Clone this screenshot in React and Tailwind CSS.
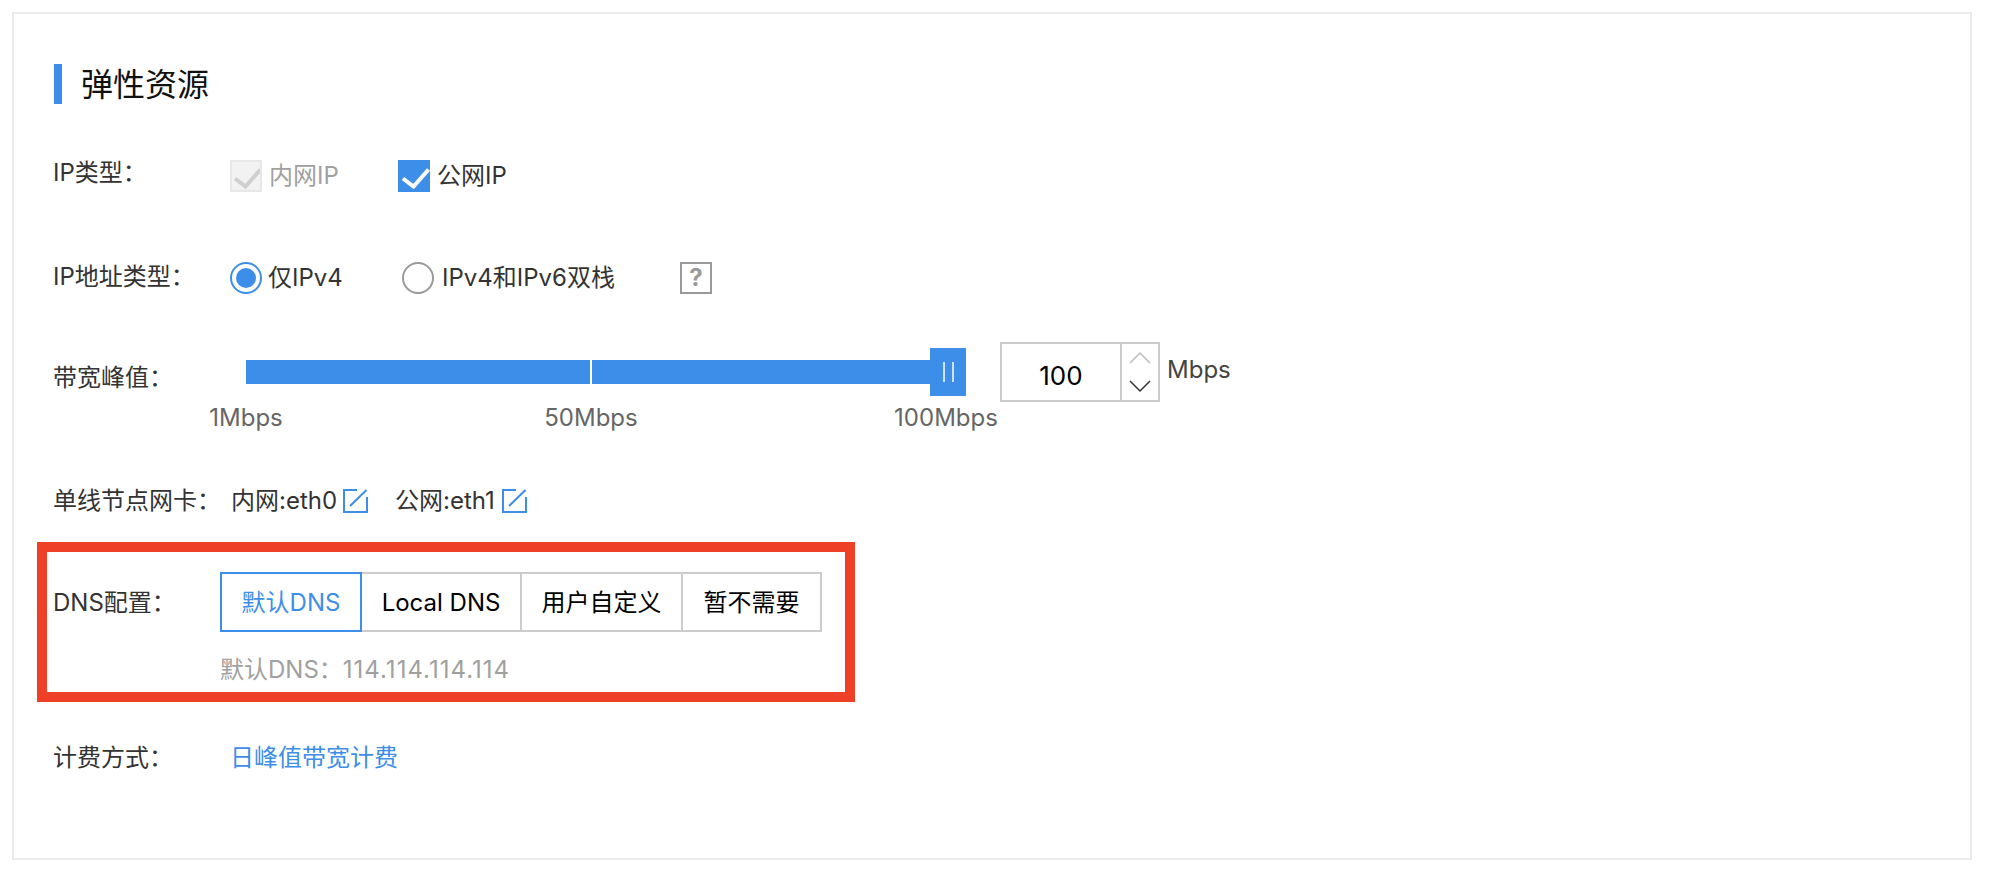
const font = 'font-["Inter","Noto_Sans_CJK_SC",sans-serif]';

function Check({ color }) {
  return (
    <svg width="32" height="32" viewBox="0 0 32 32" fill="none">
      <path d="M5 18.5 L15.5 26.5 L30.5 9.5" stroke={color} strokeWidth="4" />
    </svg>
  );
}

function EditIcon() {
  return (
    <svg width="25" height="24" viewBox="0 0 25 24" fill="none" stroke="#3d8ee8" strokeWidth="2">
      <path d="M14 1 H1 V23 H24 V8" />
      <path d="M7 17 L23.5 1" />
    </svg>
  );
}

function Label({ children, className = '' }) {
  return <div className={`-ml-px w-[177px] shrink-0 text-[24px] leading-6 text-[#333] ${className}`}>{children}</div>;
}

function SegButton({ children, active, width }) {
  return (
    <div
      className={`flex h-[60px] items-center justify-center border-2 pt-[2px] text-[24px] -ml-[2px] first:ml-0 ${width} ${
        active ? 'z-10 border-[#3d8ee8] text-[#3d8ee8]' : 'border-[#ccc] text-black'
      }`}
    >
      {children}
    </div>
  );
}

export default function App() {
  return (
    <div className={`h-[870px] w-[1992px] overflow-hidden bg-white pl-3 pt-3 ${font}`}>
      <div className="h-[848px] w-[1960px] border-2 border-[#ebebeb] pl-10 pt-[50px]">
        <div className="flex h-10 items-center border-l-8 border-[#3d8ee8] pl-[19px] pt-[2px] text-[32px] leading-10 text-[#111]">
          弹性资源
        </div>

        <div className="mt-14 flex h-8">
          <Label className="mt-[1px]">IP类型：</Label>
          <div className="flex w-[168px] items-center">
            <div className="h-8 w-8 overflow-hidden border-2 border-[#e8e8e8] bg-[#f2f2f2]">
              <div className="-m-[2px]">
                <Check color="#cfcfcf" />
              </div>
            </div>
            <span className="ml-[7px] text-[24px] text-[#a0a0a0]">内网IP</span>
          </div>
          <div className="flex items-center">
            <div className="h-8 w-8 overflow-hidden bg-[#3d8ee8]">
              <Check color="#fff" />
            </div>
            <span className="ml-[7px] text-[24px] text-[#333]">公网IP</span>
          </div>
        </div>

        <div className="mt-[70px] flex h-8">
          <Label className="mt-[3px]">IP地址类型：</Label>
          <div className="flex w-[172px] items-center">
            <div className="flex h-8 w-8 items-center justify-center rounded-full border-2 border-[#3d8ee8]">
              <div className="h-5 w-5 rounded-full bg-[#3d8ee8]"></div>
            </div>
            <span className="ml-[6px] text-[24px] text-[#333]">仅IPv4</span>
          </div>
          <div className="flex w-[278px] items-center">
            <div className="h-8 w-8 rounded-full border-2 border-[#999]"></div>
            <span className="ml-2 text-[24px] text-[#333]">IPv4和IPv6双栈</span>
          </div>
          <div className="flex h-8 w-8 items-center justify-center border-2 border-[#999] text-[24px] font-bold leading-none text-[#999]">
            ?
          </div>
        </div>

        <div className="mt-12 flex">
          <Label className="mt-[24px]">带宽峰值：</Label>
          <div className="w-[770px] shrink-0">
            <div className="ml-4 mt-[6px] flex h-12 w-[720px] items-center">
              <div className="relative h-6 w-[684px] bg-[#3d8ee8]">
                <div className="absolute left-[344px] top-0 h-6 w-[2px] bg-white"></div>
              </div>
              <div className="flex h-12 w-9 items-center justify-center gap-[7px] bg-[#3d8ee8]">
                <div className="h-5 w-[2px] bg-[#cfe2f8]"></div>
                <div className="h-5 w-[2px] bg-[#cfe2f8]"></div>
              </div>
            </div>
            <div className="-ml-[44px] mt-[10px] flex gap-[225px] text-[24px] leading-6 text-[#666]">
              <span className="w-[120px] shrink-0 text-center">1Mbps</span>
              <span className="w-[120px] shrink-0 text-center">50Mbps</span>
              <span className="ml-[10px] w-[120px] shrink-0 text-center">100Mbps</span>
            </div>
          </div>
          <div className="flex h-[60px] w-40 shrink-0 border-2 border-[#ccc]">
            <div className="flex w-[118px] items-center justify-center pt-[6px] text-[26px] text-black">100</div>
            <div className="flex w-[38px] flex-col items-center border-l-2 border-[#ccc]">
              <svg width="22" height="14" viewBox="0 0 22 14" fill="none" stroke="#bbb" strokeWidth="1.5" className="mt-[7px]">
                <path d="M1 12 L11 2 L21 12" />
              </svg>
              <svg width="22" height="14" viewBox="0 0 22 14" fill="none" stroke="#333" strokeWidth="1.5" className="mt-[14px]">
                <path d="M1 2 L11 12 L21 2" />
              </svg>
            </div>
          </div>
          <span className="ml-[7px] mt-[16px] text-[24px] leading-6 text-[#444]">Mbps</span>
        </div>

        <div className="mt-[59px] flex h-6 items-center">
          <Label>单线节点网卡：</Label>
          <span className="ml-[1px] text-[24px] text-[#333]">内网:eth0</span>
          <div className="ml-[6px]">
            <EditIcon />
          </div>
          <span className="ml-[27px] text-[24px] text-[#333]">公网:eth1</span>
          <div className="ml-[7px]">
            <EditIcon />
          </div>
        </div>

        <div className="-ml-[17px] mt-[29px] h-40 w-[818px] border-[10px] border-[#ee4027] pl-[7px] pt-5">
          <div className="flex">
            <Label className="mt-[19px] !w-[167px]">DNS配置：</Label>
            <div>
              <div className="flex">
                <SegButton active width="w-[142px]">默认DNS</SegButton>
                <SegButton width="w-[162px]">Local DNS</SegButton>
                <SegButton width="w-[163px]">用户自定义</SegButton>
                <SegButton width="w-[141px]">暂不需要</SegButton>
              </div>
              <div className="mt-[26px] text-[24px] leading-6 text-[#a0a0a0]">
                默认DNS：<span className="tracking-[1px]">114.114.114.114</span>
              </div>
            </div>
          </div>
        </div>

        <div className="mt-[44px] flex h-6 items-center">
          <Label>计费方式：</Label>
          <span className="text-[24px] text-[#3d8ee8]">日峰值带宽计费</span>
        </div>
      </div>
    </div>
  );
}
